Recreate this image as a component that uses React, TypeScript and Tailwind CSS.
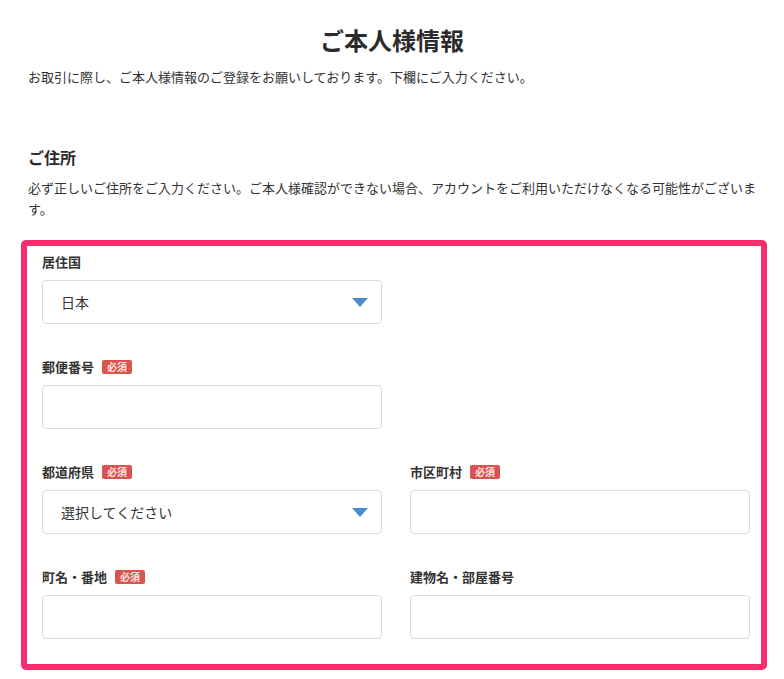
const font = 'font-["Noto_Sans_CJK_JP","Noto_Sans",sans-serif]'

function Badge() {
  return (
    <span className="ml-[8px] inline-flex h-[14px] items-center rounded-[2px] bg-[#d9534f] px-[5px] text-[10px] leading-none text-[#fbe3e2]">
      必須
    </span>
  )
}

function Caret() {
  return (
    <svg width="16" height="9" viewBox="0 0 16 9" aria-hidden="true">
      <path d="M0 0h16L8 9z" fill="#4a8ccb" />
    </svg>
  )
}

interface FieldProps {
  label: string
  required?: boolean
  select?: string
}

function Field({ label, required, select }: FieldProps) {
  return (
    <div>
      <div className="flex h-[20px] items-center text-[13px] font-bold text-[#333]">
        {label}
        {required && <Badge />}
      </div>
      <div className="mt-[8px] flex h-[44px] items-center justify-between rounded-[4px] border border-[#dcdcdc] bg-white pl-[18px] pr-[13px]">
        {select && (
          <>
            <span className="text-[14px] text-[#333]">{select}</span>
            <Caret />
          </>
        )}
      </div>
    </div>
  )
}

export default function App() {
  return (
    <div className={`${font} min-h-[679px] w-[784px] bg-white`}>
      <div className="px-[28px] pt-[24px]">
        <h1 className="text-center text-[24px] font-bold leading-[32px] text-[#2b2b2b]">
          ご本人様情報
        </h1>
        <p className="mt-[10px] text-[13px] leading-[21px] text-[#333]">
          お取引に際し、ご本人様情報のご登録をお願いしております。下欄にご入力ください。
        </p>
        <h2 className="mt-[58px] text-[16px] font-bold leading-[24px] text-[#2b2b2b]">ご住所</h2>
        <p className="mt-[8px] w-[738px] text-[13px] leading-[21px] text-[#333]">
          必ず正しいご住所をご入力ください。ご本人様確認ができない場合、アカウントをご利用いただけなくなる可能性がございます。
        </p>
      </div>

      {/* highlighted form area */}
      <div className="ml-[21px] mt-[21px] w-[746px] rounded-[5px] border-[6px] border-[#f72e6d] pb-[25px] pl-[15px] pr-[11px] pt-[6px]">
        <div className="grid grid-cols-[340px_340px] gap-x-[28px] gap-y-[33px]">
          <Field label="居住国" select="日本" />
          <div />
          <Field label="郵便番号" required />
          <div />
          <Field label="都道府県" required select="選択してください" />
          <Field label="市区町村" required />
          <Field label="町名・番地" required />
          <Field label="建物名・部屋番号" />
        </div>
      </div>
    </div>
  )
}
